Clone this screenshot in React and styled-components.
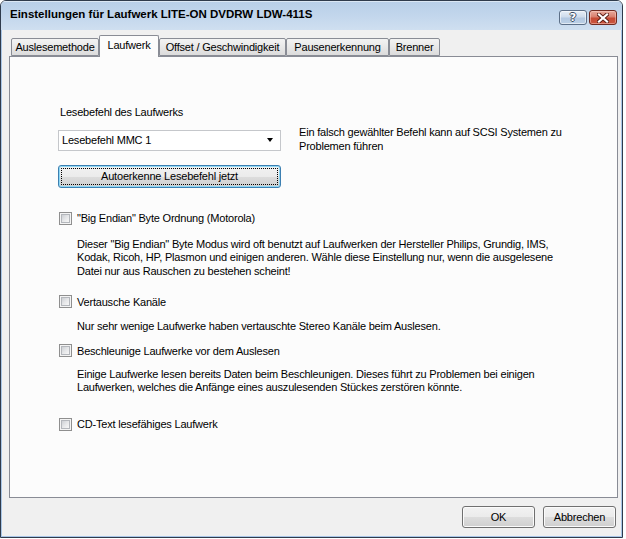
import React from "react";
import styled, { createGlobalStyle } from "styled-components";

const Global = createGlobalStyle`
  html, body { margin: 0; padding: 0; background: #ffffff; }
  body {
    font-family: "Liberation Sans", Arial, sans-serif;
    font-size: 11px;
    color: #000;
  }
  * { box-sizing: border-box; }
`;

const Window = styled.div`
  width: 623px;
  height: 538px;
  display: flex;
  flex-direction: column;
  border: 1px solid #2f3b4c;
  border-radius: 6px 6px 0 0;
  background: #f0f0f0;
  overflow: hidden;
`;

const TitleBar = styled.div`
  height: 29px;
  flex: none;
  display: flex;
  align-items: flex-start;
  padding: 0 5px 0 9px;
  background: linear-gradient(180deg, #b8cfe8 0%, #c2d6ec 50%, #cfdff0 100%);
  box-shadow: inset 0 1px 0 #dbe7f4;
`;

const Title = styled.div`
  flex: 1;
  font-weight: bold;
  font-size: 11.5px;
  line-height: 14px;
  margin-top: 6px;
  white-space: nowrap;
  letter-spacing: 0;
`;

const CaptionButtons = styled.div`
  display: flex;
  gap: 2px;
  margin-top: 9px;
`;

const CaptionButton = styled.div`
  width: 28px;
  height: 15px;
  border-radius: 3px;
  border: 1px solid ${(p) => (p.$close ? "#6f2a20" : "#5c6f87")};
  background: ${(p) =>
    p.$close
      ? "linear-gradient(180deg, #e8aa9c 0%, #d9806f 45%, #c64b35 55%, #c9553f 100%)"
      : "linear-gradient(180deg, #e6eef7 0%, #cfdcec 45%, #b3c8e1 55%, #bcd0e6 100%)"};
  box-shadow: inset 0 0 0 1px ${(p) => (p.$close ? "rgba(255,220,210,0.45)" : "rgba(255,255,255,0.55)")};
  display: flex;
  align-items: center;
  justify-content: center;
`;

const HelpGlyph = styled.span`
  font-family: "DejaVu Sans", sans-serif;
  font-weight: bold;
  font-size: 11px;
  line-height: 11px;
  color: #ffffff;
  text-shadow: 1px 0 #3e4e63, -1px 0 #3e4e63, 0 1px #3e4e63, 0 -1px #3e4e63;
`;

const Body = styled.div`
  flex: 1;
  display: flex;
  flex-direction: column;
  padding: 5px 3px 8px 7px;
  border: 1px solid #a9c6e6;
  border-top: none;
`;

const TabStrip = styled.div`
  height: 21px;
  flex: none;
  display: flex;
  align-items: flex-end;
  padding-left: 2px;
  position: relative;
  z-index: 1;
`;

const Tab = styled.div`
  width: ${(p) => p.$w}px;
  height: ${(p) => (p.$active ? 22 : 18)}px;
  margin-bottom: ${(p) => (p.$active ? -1 : 0)}px;
  border: 1px solid #898c95;
  border-bottom: ${(p) => (p.$active ? "none" : "1px solid #898c95")};
  border-radius: 2px 2px 0 0;
  background: ${(p) =>
    p.$active ? "#fcfcfc" : "linear-gradient(180deg, #f3f3f3 0%, #e8e8e8 50%, #dcdcdc 100%)"};
  display: flex;
  justify-content: center;
  align-items: flex-start;
  padding-top: ${(p) => (p.$active ? 2 : 1)}px;
  line-height: 14px;
  white-space: nowrap;
  letter-spacing: -0.2px;
`;

const Panel = styled.div`
  height: 442px;
  flex: none;
  border: 1px solid #898c95;
  background: #fcfcfc;
  padding: 49px 0 0 49px;
  display: flex;
  flex-direction: column;
  align-items: flex-start;
`;

const Text = styled.div`
  line-height: 13.5px;
  white-space: nowrap;
  letter-spacing: -0.2px;
  margin-top: ${(p) => p.$mt || 0}px;
  margin-left: ${(p) => p.$ml || 0}px;
`;

const ComboRow = styled.div`
  display: flex;
  align-items: flex-start;
  margin-top: 10px;
`;

const Combo = styled.div`
  width: 223px;
  height: 21px;
  margin-left: -1px;
  border: 1px solid #c5c7cb;
  background: #ffffff;
  display: flex;
  align-items: center;
  justify-content: space-between;
  padding: 0 7px 0 3px;
  letter-spacing: -0.2px;
`;

const Arrow = styled.span`
  width: 0;
  height: 0;
  border-left: 3.5px solid transparent;
  border-right: 3.5px solid transparent;
  border-top: 4px solid #000;
`;

const SideNote = styled.div`
  margin-left: 18px;
  margin-top: -5px;
  line-height: 14px;
  white-space: nowrap;
  letter-spacing: -0.2px;
`;

const PushButton = styled.div`
  width: ${(p) => p.$w}px;
  height: ${(p) => p.$h}px;
  margin-top: ${(p) => p.$mt || 0}px;
  margin-left: ${(p) => p.$ml || 0}px;
  border: 1px solid ${(p) => (p.$focused ? "#3c7fb1" : "#707070")};
  border-radius: 3px;
  background: linear-gradient(180deg, #f2f2f2 0%, #ebebeb 50%, #dddddd 50%, #cfcfcf 100%);
  box-shadow: inset 0 0 0 1px ${(p) => (p.$focused ? "#8fd8f5" : "#fbfbfb")};
  display: flex;
  align-items: center;
  justify-content: center;
  position: relative;
  letter-spacing: -0.2px;
  line-height: 13px;
  white-space: nowrap;
`;

const FocusRing = styled.div`
  position: absolute;
  inset: 2px;
  border: 1px dotted #000;
  border-radius: 1px;
`;

const CheckRow = styled.div`
  display: flex;
  align-items: center;
  gap: 5px;
  height: 13.5px;
  margin-top: ${(p) => p.$mt || 0}px;
  white-space: nowrap;
  letter-spacing: -0.2px;
`;

const Box = styled.span`
  width: 13px;
  height: 13px;
  flex: none;
  border: 1px solid #8f8f8f;
  background: #f4f4f4;
  padding: 1px;
  display: flex;
`;

const BoxInner = styled.span`
  flex: 1;
  border: 1px solid #b4b7bc;
  background: linear-gradient(135deg, #cdd0d4 0%, #e6e7e9 50%, #f7f7f7 100%);
`;

const Footer = styled.div`
  display: flex;
  justify-content: flex-end;
  gap: 8px;
  margin-top: 8px;
  padding-right: 2px;
`;

const Checkbox = ({ mt, children }) => (
  <CheckRow $mt={mt}>
    <Box>
      <BoxInner />
    </Box>
    <span>{children}</span>
  </CheckRow>
);

export default function App() {
  return (
    <>
      <Global />
      <Window>
        <TitleBar>
          <Title>Einstellungen für Laufwerk LITE-ON DVDRW LDW-411S</Title>
          <CaptionButtons>
            <CaptionButton>
              <HelpGlyph>?</HelpGlyph>
            </CaptionButton>
            <CaptionButton $close>
              <svg width="12" height="10" viewBox="0 0 12 10">
                <path d="M2 1.5 L10 8.5 M10 1.5 L2 8.5" stroke="#5a1e15" strokeWidth="4" strokeLinecap="square" />
                <path d="M2 1.5 L10 8.5 M10 1.5 L2 8.5" stroke="#ffffff" strokeWidth="2.2" strokeLinecap="square" />
              </svg>
            </CaptionButton>
          </CaptionButtons>
        </TitleBar>
        <Body>
          <TabStrip>
            <Tab $w={88}>Auslesemethode</Tab>
            <Tab $w={60} $active>Laufwerk</Tab>
            <Tab $w={127}>Offset / Geschwindigkeit</Tab>
            <Tab $w={103}>Pausenerkennung</Tab>
            <Tab $w={51}>Brenner</Tab>
          </TabStrip>
          <Panel>
            <Text $ml={1}>Lesebefehl des Laufwerks</Text>
            <ComboRow>
              <Combo>
                <span>Lesebefehl MMC 1</span>
                <Arrow />
              </Combo>
              <SideNote>
                Ein falsch gewählter Befehl kann auf SCSI Systemen zu
                <br />
                Problemen führen
              </SideNote>
            </ComboRow>
            <PushButton $w={223} $h={23} $mt={12} $ml={-1} $focused>
              <FocusRing />
              Autoerkenne Lesebefehl jetzt
            </PushButton>

            <Checkbox mt={24}>"Big Endian" Byte Ordnung (Motorola)</Checkbox>
            <Text $mt={12.5} $ml={18}>
              Dieser "Big Endian" Byte Modus wird oft benutzt auf Laufwerken der Hersteller Philips, Grundig, IMS,
              <br />
              Kodak, Ricoh, HP, Plasmon und einigen anderen. Wähle diese Einstellung nur, wenn die ausgelesene
              <br />
              Datei nur aus Rauschen zu bestehen scheint!
            </Text>

            <Checkbox mt={17}>Vertausche Kanäle</Checkbox>
            <Text $mt={11} $ml={18}>
              Nur sehr wenige Laufwerke haben vertauschte Stereo Kanäle beim Auslesen.
            </Text>

            <Checkbox mt={11}>Beschleunige Laufwerke vor dem Auslesen</Checkbox>
            <Text $mt={10} $ml={18}>
              Einige Laufwerke lesen bereits Daten beim Beschleunigen. Dieses führt zu Problemen bei einigen
              <br />
              Laufwerken, welches die Anfänge eines auszulesenden Stückes zerstören könnte.
            </Text>

            <Checkbox mt={23}>CD-Text lesefähiges Laufwerk</Checkbox>
          </Panel>
          <Footer>
            <PushButton $w={73} $h={22}>OK</PushButton>
            <PushButton $w={73} $h={22}>Abbrechen</PushButton>
          </Footer>
        </Body>
      </Window>
    </>
  );
}
